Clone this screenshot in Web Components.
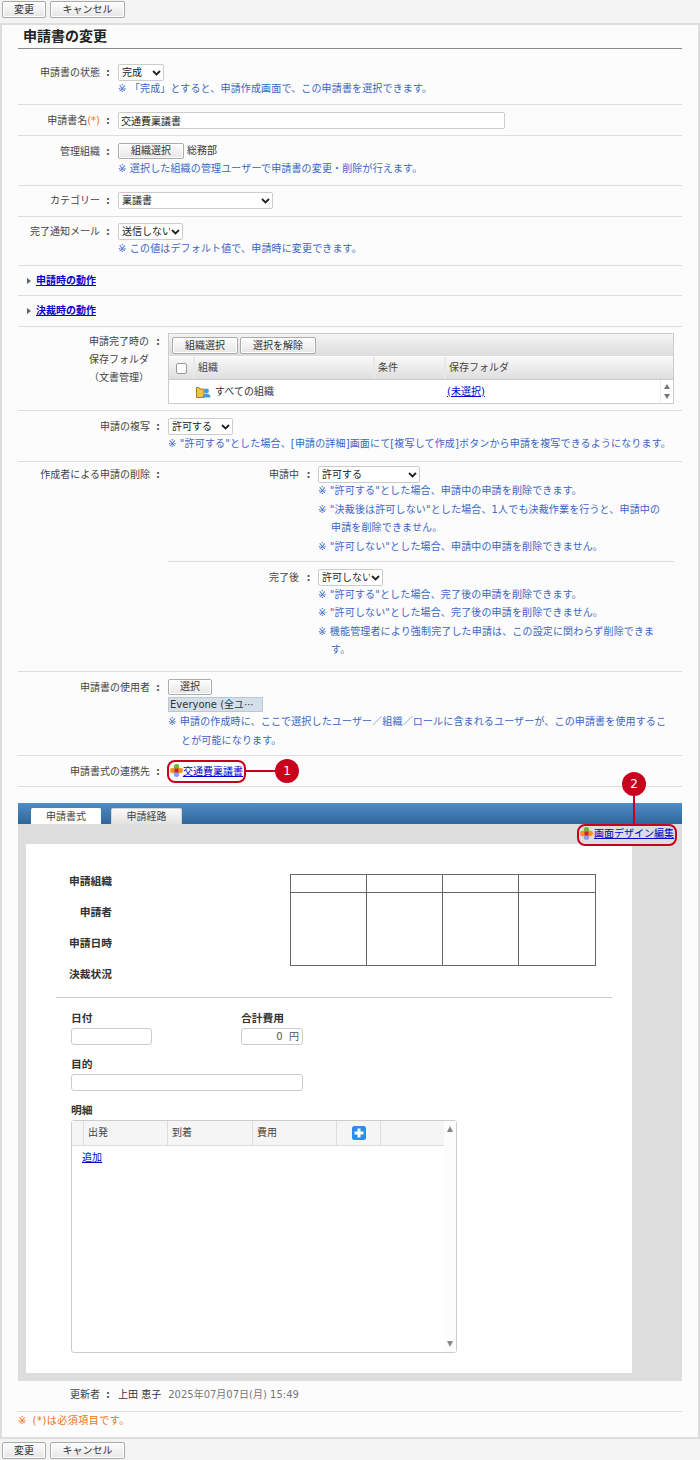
<!DOCTYPE html>
<html lang="ja">
<head>
<meta charset="UTF-8" />
<title>申請書の変更</title>
<style>
  * { box-sizing: border-box; }
  html, body { margin: 0; padding: 0; background: #f3f3f3; }
  body {
    width: 700px; height: 1460px; position: relative; overflow: hidden;
    font: 10px/1.4 "DejaVu Sans", "Noto Sans CJK JP", sans-serif; color: #333;
  }
  a { color: #00c; }
</style>
</head>
<body>
<template id="btn-tpl">
  <style>
    * { box-sizing: border-box; }
    :host { display: inline-block; }
    button {
      display: block; height: var(--h, 17px); width: var(--w, auto); padding: 0 11px; margin: 0;
      font: inherit; font-size: 10px; line-height: 1; color: #333;
      border: 1px solid #aaa; border-radius: 2px; box-shadow: inset 0 0 0 1px #fff;
      background: linear-gradient(#fdfdfd, #e6e6e6);
    }
  </style>
  <button type="button"><slot></slot></button>
</template>

<template id="bar-tpl">
  <style>
    :host { display: flex; gap: 4px; padding: 1px 2px; }
  </style>
  <slot></slot>
</template>

<template id="row-tpl">
  <style>
    * { box-sizing: border-box; }
    :host {
      display: flex; border-bottom: 1px solid #ddd; color: #333;
      height: var(--row-h, auto); padding-top: var(--row-top, 7px);
    }
    .label { flex: none; width: var(--label-w, 82px); text-align: right; color: #444; line-height: 17px; }
    .colon { flex: none; width: 18px; padding-right: 2px; text-align: center; line-height: 17px; font-weight: bold; color: #555; }
    .field { flex: 1; min-width: 0; padding-right: var(--field-pr, 8px); }
  </style>
  <div class="label"><slot name="label"></slot></div>
  <div class="colon">:</div>
  <div class="field"><slot></slot></div>
</template>

<template id="sub-tpl">
  <style>
    * { box-sizing: border-box; }
    :host { display: flex; height: var(--sub-h, auto); padding-top: var(--sub-top, 0); border-bottom: var(--sub-line, 1px) solid #ddd; }
    .l { flex: none; width: 131px; text-align: right; color: #444; line-height: 17px; }
    .colon { flex: none; width: 19px; text-align: center; font-weight: bold; line-height: 17px; color: #555; }
    .f { flex: 1; min-width: 0; padding-right: 8px; }
  </style>
  <div class="l"><slot name="label"></slot></div>
  <div class="colon">:</div>
  <div class="f"><slot></slot></div>
</template>

<template id="note-tpl">
  <style>
    :host { display: block; color: #3a66c4; line-height: 18.5px; padding-left: 13px; text-indent: -13px; letter-spacing: 0.15px; }
  </style>
  <slot></slot>
</template>

<template id="section-tpl">
  <style>
    * { box-sizing: border-box; }
    :host { display: flex; align-items: center; gap: 5px; height: var(--sec-h, 31px); border-bottom: 1px solid #ddd; padding-left: 9px; font-weight: bold; }
    i { width: 0; height: 0; border-left: 4px solid #567; border-top: 3.5px solid transparent; border-bottom: 3.5px solid transparent; }
    a { color: #00c; text-decoration: underline; }
  </style>
  <i></i><a href="#"><slot></slot></a>
</template>

<template id="flower-tpl">
  <style>:host { display: inline-block; width: 13px; height: 13px; vertical-align: -2px; } svg { display: block; }</style>
  <svg width="13" height="13" viewBox="0 0 13 13">
    <circle cx="6.5" cy="2.8" r="2.7" fill="#6fb52e"/>
    <circle cx="2.8" cy="6.5" r="2.7" fill="#f5941c"/>
    <circle cx="10.2" cy="6.5" r="2.7" fill="#f5941c"/>
    <circle cx="6.5" cy="10.2" r="2.7" fill="#8f98ee"/>
    <rect x="4.5" y="4.5" width="4" height="4" fill="#d4202a"/>
  </svg>
</template>

<template id="folder-grid-tpl">
  <style>
    * { box-sizing: border-box; }
    :host { display: block; width: 506px; border: 1px solid #ccc; background: #fff; }
    .tools { display: flex; gap: 2px; height: 23px; padding: 3px; background: linear-gradient(#f4f4f4, #dcdcdc); border-bottom: 1px solid #fff; }
    .head { display: grid; grid-template-columns: 24px 180px 71px 1fr; height: 23px; background: linear-gradient(#f8f8f8, #dedede); border-bottom: 1px solid #ccc; }
    .head > div { display: flex; align-items: center; padding-left: 3px; border-left: 2px solid #e8e8e8; color: #444; }
    .head > div:first-child { border-left: 0; justify-content: center; padding: 0; }
    .box { width: 11px; height: 11px; border: 1px solid #999; border-radius: 2px; background: #fff; }
    .body { display: grid; grid-template-columns: 24px 180px 71px 1fr 13px; height: 23px; align-items: center; }
    .cell { padding-left: 3px; white-space: nowrap; }
    .org { display: flex; align-items: center; gap: 4px; padding-left: 3px; }
    a { color: #00c; }
    .scroll { height: 100%; display: flex; flex-direction: column; justify-content: space-between; align-items: center; border-left: 1px solid #eee; padding: 4px 0; }
    .up { border-bottom: 5px solid #777; border-left: 3.5px solid transparent; border-right: 3.5px solid transparent; }
    .down { border-top: 5px solid #777; border-left: 3.5px solid transparent; border-right: 3.5px solid transparent; }
  </style>
  <div class="tools"><x-btn style="--w:66px">組織選択</x-btn><x-btn style="--w:76px">選択を解除</x-btn></div>
  <div class="head"><div><div class="box"></div></div><div>組織</div><div>条件</div><div>保存フォルダ</div></div>
  <div class="body">
    <div></div>
    <div class="org">
      <svg width="15" height="13" viewBox="0 0 15 13">
        <path d="M0.5 2.5V12.5H8V4H4L3 2.5Z" fill="#f0c24a" stroke="#a87a18"/>
        <circle cx="10.5" cy="6" r="2.4" fill="#3f9be0"/>
        <path d="M6.5 12.5C6.5 9.8 8.2 8.8 10.5 8.8S14.5 9.8 14.5 12.5Z" fill="#3f9be0"/>
      </svg>
      すべての組織
    </div>
    <div></div>
    <div class="cell"><a href="#">(未選択)</a></div>
    <div class="scroll"><div class="up"></div><div class="down"></div></div>
  </div>
</template>

<template id="stamp-tpl">
  <style>
    * { box-sizing: border-box; }
    :host { display: block; flex: none; width: 306px; height: 92px; border: 1px solid #666; background: #fff; }
    .grid { display: grid; grid-template-columns: repeat(4, 1fr); grid-template-rows: 18px 1fr; height: 100%; }
    .grid div { border-right: 1px solid #666; border-bottom: 1px solid #666; }
    .grid div:nth-child(4n) { border-right: 0; }
    .grid div:nth-child(n+5) { border-bottom: 0; }
  </style>
  <div class="grid"><div></div><div></div><div></div><div></div><div></div><div></div><div></div><div></div></div>
</template>

<template id="design-tpl">
  <style>
    * { box-sizing: border-box; }
    :host { display: block; margin-top: 16px; height: 578px; background: #ddd; }
    .head { height: 21px; padding: 5px 0 0 13px; display: flex; gap: 10px; background: linear-gradient(#4f8dc6, #2f6699); }
    .tab { width: 71px; height: 16px; display: flex; align-items: center; justify-content: center; border-radius: 2px 2px 0 0; background: linear-gradient(#fafafa, #e2e2e2); border: 1px solid #cfd6dc; border-bottom: 0; color: #444; }
    .tab.on { width: 70px; background: #fff; border-color: #fff; }
    .link { height: 20px; padding: 0 8px 1px 0; display: flex; align-items: center; justify-content: flex-end; }
    .link a { margin-left: 1px; }
    a { color: #00c; }
    .canvas { width: 606px; height: 529px; margin-left: 8px; background: #fff; }
  </style>
  <div class="head"><div class="tab on">申請書式</div><div class="tab">申請経路</div></div>
  <div class="link"><x-flower></x-flower><a href="#">画面デザイン編集</a></div>
  <div class="canvas"><slot></slot></div>
</template>

<template id="sheet-tpl">
  <style>
    * { box-sizing: border-box; }
    :host { display: block; padding: 30px 0 0 30px; color: #222; }
    b { font-weight: bold; font-size: 10.75px; color: #333; }
    .top { display: flex; height: 123px; }
    .who { flex: none; width: 234px; padding-left: 13px; display: grid; grid-template-columns: 43px; grid-auto-rows: 31px; margin-top: -1px; }
    .who b { text-align: right; line-height: 17px; white-space: nowrap; }
    hr { margin: 0; border: 0; border-top: 1px solid #ccc; width: 556px; }
    .form { margin-left: 15px; padding-top: 12px; }
    .pair { display: flex; }
    .lab { display: block; line-height: 17px; height: 17px; margin-bottom: 1px; font-weight: bold; font-size: 10.75px; color: #333; }
    .in { height: 17px; border: 1px solid #ccc; border-radius: 3px; background: #fff; display: flex; align-items: center; justify-content: flex-end; padding-right: 3px; color: #555; }
    .f { margin-bottom: 11px; }
    .detail { position: relative; width: 386px; height: 233px; border: 1px solid #ccc; border-radius: 3px; }
    .dh { display: grid; grid-template-columns: 12px 84px 85px 84px 44px 64px; width: 373px; height: 25px; background: #f5f5f5; border-bottom: 1px solid #ddd; }
    .dh div { display: flex; align-items: center; padding-left: 4px; border-right: 1px solid #ddd; color: #444; }
    .dh div.c { justify-content: center; padding: 0; }
    .dh div:last-child { border-right: 0; }
    .add { padding: 5px 0 0 10px; }
    a { color: #00c; }
    .sb { position: absolute; top: 0; right: 0; bottom: 0; width: 12px; background: #fcfcfc; display: flex; flex-direction: column; justify-content: space-between; align-items: center; padding: 5px 0; }
    .up { border-bottom: 6px solid #888; border-left: 3.5px solid transparent; border-right: 3.5px solid transparent; }
    .down { border-top: 6px solid #888; border-left: 3.5px solid transparent; border-right: 3.5px solid transparent; }
  </style>
  <div class="top">
    <div class="who">
      <b>申請組織</b><b>申請者</b><b>申請日時</b><b>決裁状況</b>
    </div>
    <x-stamp></x-stamp>
  </div>
  <hr>
  <div class="form">
    <div class="pair f">
      <div style="width:170px"><span class="lab">日付</span><div class="in" style="width:81px"></div></div>
      <div><span class="lab">合計費用</span><div class="in" style="width:62px">0&nbsp;&nbsp;円</div></div>
    </div>
    <div class="f"><span class="lab">目的</span><div class="in" style="width:232px"></div></div>
    <span class="lab">明細</span>
    <div class="detail">
      <div class="dh">
        <div></div><div>出発</div><div>到着</div><div>費用</div>
        <div class="c"><svg width="14" height="14" viewBox="0 0 14 14"><rect width="14" height="14" rx="2.5" fill="#2b8df0"/><path d="M7 2.5V11.5M2.5 7H11.5" stroke="#fff" stroke-width="3"/></svg></div>
        <div></div>
      </div>
      <div class="add"><a href="#">追加</a></div>
      <div class="sb"><div class="up"></div><div class="down"></div></div>
    </div>
  </div>
</template>

<template id="panel-tpl">
  <style>
    * { box-sizing: border-box; }
    :host { display: block; position: absolute; left: 0; top: 23px; width: 700px; height: 1416px; background: #fcfcfc; border: 2px solid #ddd; padding: 0 16px; }
    h1 { margin: 0; height: 24px; border-bottom: 1px solid #888; font-size: 14px; line-height: 22px; font-weight: bold; color: #222; padding-left: 5px; }
    ::slotted(x-row.w) { --label-w: 132px; }
  </style>
  <h1>申請書の変更</h1>
  <slot></slot>
</template>

<template id="callout-tpl">
  <style>
    * { box-sizing: border-box; }
    :host { position: absolute; left: 0; top: 0; display: block; pointer-events: none; }
    .box { position: absolute; border: 2px solid #c8001e; border-radius: 8px; }
    .line { position: absolute; background: #c8001e; }
    .num { position: absolute; width: 24px; height: 24px; border-radius: 50%; background: #c8001e; color: #fff; font: 12px/24px "DejaVu Sans", sans-serif; text-align: center; }
  </style>
  <div class="box"></div><div class="line"></div><div class="num"><slot></slot></div>
</template>

<x-bar><x-btn style="--w:44px">変更</x-btn><x-btn style="--w:75px">キャンセル</x-btn></x-bar>

<x-panel>
  <x-row style="--row-h:56px;--row-top:15px">
    <span slot="label">申請書の状態</span>
    <select style="width:46px"><option>完成</option></select>
    <x-note style="margin-top:-1px">※ 「完成」とすると、申請作成画面で、この申請書を選択できます。</x-note>
  </x-row>
  <x-row style="--row-h:31px">
    <span slot="label">申請書名<span style="color:#f07020">(*)</span></span>
    <input type="text" value="交通費稟議書" style="width:387px">
  </x-row>
  <x-row style="--row-h:50px">
    <span slot="label">管理組織</span>
    <div style="display:flex;align-items:center;gap:3px"><x-btn style="--w:66px;--h:16px">組織選択</x-btn><span>総務部</span></div>
    <x-note style="margin-top:1px">※ 選択した組織の管理ユーザーで申請書の変更・削除が行えます。</x-note>
  </x-row>
  <x-row style="--row-h:31px;--row-top:6px">
    <span slot="label">カテゴリー</span>
    <select style="width:155px"><option>稟議書</option></select>
  </x-row>
  <x-row style="--row-h:49px;--row-top:6px">
    <span slot="label">完了通知メール</span>
    <select style="width:65px"><option>送信しない</option></select>
    <x-note>※ この値はデフォルト値で、申請時に変更できます。</x-note>
  </x-row>
  <x-section style="--sec-h:30px">申請時の動作</x-section>
  <x-section>決裁時の動作</x-section>
  <x-row class="w" style="--row-h:84px;--row-top:6px">
    <span slot="label" style="display:inline-block;width:62px;text-align:center;line-height:18px">申請完了時の<br>保存フォルダ<br>（文書管理）</span>
    <x-folder-grid></x-folder-grid>
  </x-row>
  <x-row class="w" style="--row-h:51px">
    <span slot="label">申請の複写</span>
    <select style="width:65px"><option>許可する</option></select>
    <x-note>※ "許可する"とした場合、[申請の詳細]画面にて[複写して作成]ボタンから申請を複写できるようになります。</x-note>
  </x-row>
  <x-row class="w" style="--row-h:210px;--row-top:4px">
    <span slot="label">作成者による申請の削除</span>
    <x-sub style="--sub-h:96px">
      <span slot="label">申請中</span>
      <select style="width:102px"><option>許可する</option></select>
      <x-note style="margin-top:-1px">※ "許可する"とした場合、申請中の申請を削除できます。</x-note>
      <x-note>※ "決裁後は許可しない"とした場合、1人でも決裁作業を行うと、申請中の申請を削除できません。</x-note>
      <x-note>※ "許可しない"とした場合、申請中の申請を削除できません。</x-note>
    </x-sub>
    <x-sub style="--sub-top:7px;--sub-line:0">
      <span slot="label">完了後</span>
      <select style="width:65px"><option>許可しない</option></select>
      <x-note style="margin-top:-.5px">※ "許可する"とした場合、完了後の申請を削除できます。</x-note>
      <x-note>※ "許可しない"とした場合、完了後の申請を削除できません。</x-note>
      <x-note>※ 機能管理者により強制完了した申請は、この設定に関わらず削除できます。</x-note>
    </x-sub>
  </x-row>
  <x-row class="w" style="--row-h:84px;--field-pr:14px">
    <span slot="label">申請書の使用者</span>
    <x-btn style="--w:44px;--h:16px">選択</x-btn>
    <div style="width:95px;height:15px;margin-top:2px;background:#d3e0ea;border:1px solid #b8c8d4;line-height:13px;padding-left:1px;white-space:nowrap;overflow:hidden">Everyone (全ユ⋯</div>
    <x-note style="margin-top:1px">※ 申請の作成時に、ここで選択したユーザー／組織／ロールに含まれるユーザーが、この申請書を使用することが可能になります。</x-note>
  </x-row>
  <x-row class="w" style="--row-h:31px">
    <span slot="label">申請書式の連携先</span>
    <div style="line-height:17px;padding-left:2px"><x-flower></x-flower><a href="#">交通費稟議書</a></div>
  </x-row>
  <x-design><x-sheet></x-sheet></x-design>
  <x-row style="--row-h:31px;--row-top:5px">
    <span slot="label">更新者</span>
    <div style="line-height:17px">上田 恵子<span style="margin-left:7px;color:#777">2025年07月07日(月) 15:49</span></div>
  </x-row>
  <div style="color:#f07020;line-height:18px;letter-spacing:.5px;word-spacing:2px">※ (*)は必須項目です。</div>
</x-panel>

<x-bar style="position:absolute;left:0;top:1441px"><x-btn style="--w:44px">変更</x-btn><x-btn style="--w:75px">キャンセル</x-btn></x-bar>

<x-callout data-box="167,760,79,23" data-line="246,770,30,2" data-num="275,759">1</x-callout>
<x-callout data-box="577,824,100,22" data-line="633,796,2,28" data-num="622,772">2</x-callout>

<script>
  // every element is a template plus an open shadow root
  function plain(name, tplId) {
    customElements.define(name, class extends HTMLElement {
      constructor() {
        super()
        this.attachShadow({ mode: 'open' })
        this.shadowRoot.appendChild(document.getElementById(tplId).content.cloneNode(true))
      }
    })
  }

  plain('x-btn', 'btn-tpl')
  plain('x-bar', 'bar-tpl')
  plain('x-row', 'row-tpl')
  plain('x-sub', 'sub-tpl')
  plain('x-note', 'note-tpl')
  plain('x-section', 'section-tpl')
  plain('x-flower', 'flower-tpl')
  plain('x-folder-grid', 'folder-grid-tpl')
  plain('x-stamp', 'stamp-tpl')
  plain('x-design', 'design-tpl')
  plain('x-sheet', 'sheet-tpl')
  plain('x-panel', 'panel-tpl')

  class XCallout extends HTMLElement {
    constructor() {
      super()
      this.attachShadow({ mode: 'open' })
      this.shadowRoot.appendChild(document.getElementById('callout-tpl').content.cloneNode(true))
    }
    connectedCallback() {
      const s = this.shadowRoot
      const [bx, by, bw, bh] = this.dataset.box.split(',')
      const [lx, ly, lw, lh] = this.dataset.line.split(',')
      const [nx, ny] = this.dataset.num.split(',')
      s.querySelector('.box').style.cssText = `left:${bx}px;top:${by}px;width:${bw}px;height:${bh}px`
      s.querySelector('.line').style.cssText = `left:${lx}px;top:${ly}px;width:${lw}px;height:${lh}px`
      s.querySelector('.num').style.cssText = `left:${nx}px;top:${ny}px`
    }
  }
  customElements.define('x-callout', XCallout)
</script>
<style>
  /* controls sit in the page tree, so they are styled here */
  select, input[type=text] {
    display: block; font: inherit; font-size: 10px; color: #222; background: #fff;
    border: 1px solid #ccc; border-radius: 2px; height: 17px; margin: 0;
  }
  select {
    appearance: none; -webkit-appearance: none; padding: 0 12px 0 3px;
    background: #fff url("data:image/svg+xml,%3Csvg xmlns='http://www.w3.org/2000/svg' width='9' height='6'%3E%3Cpath d='M1 1L4.5 4.5L8 1' fill='none' stroke='%23222' stroke-width='1.8'/%3E%3C/svg%3E") no-repeat right 2px center;
  }
  input[type=text] { padding: 0 2px; }
</style>
</body>
</html>
